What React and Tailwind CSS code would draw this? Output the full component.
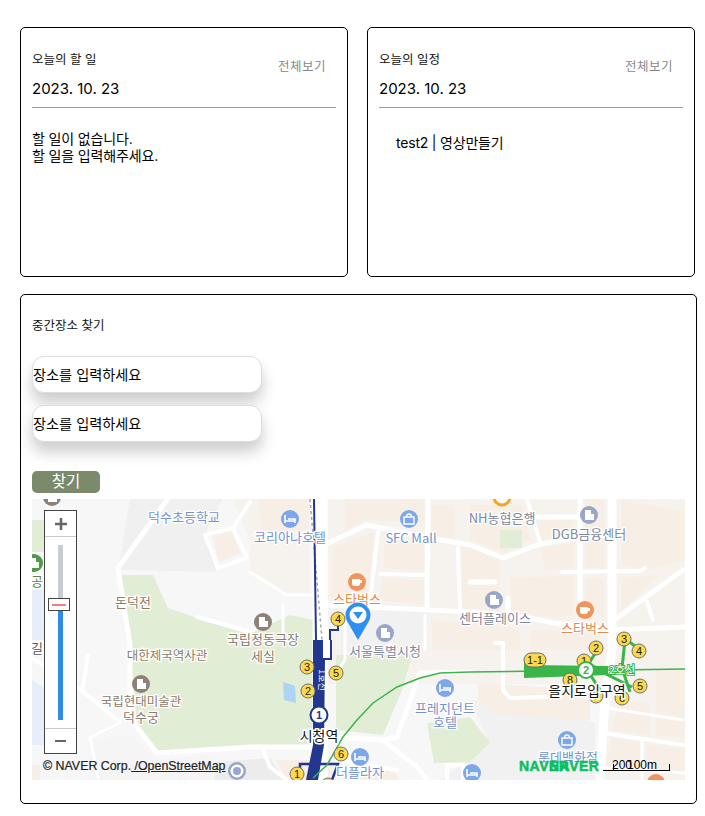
const FONT = "font-['Inter','Noto_Sans_CJK_KR',sans-serif]";

function TodayCard({ title, children }) {
  return (
    <div className="w-[328px] h-[250px] border border-black rounded-[5px] bg-white pt-[23px] px-[11px]">
      <div className="flex justify-between w-[304px]">
        <div className="text-[12.5px] leading-[17px] text-[#111]">{title}</div>
        <div className="text-[12.5px] leading-[17px] tracking-[0.5px] text-[#888] mt-[7px] mr-[10px]">전체보기</div>
      </div>
      <div className="text-[15px] leading-[20px] text-black mt-[4px] pb-[8px] border-b border-[#999] w-[304px]">2023. 10. 23</div>
      {children}
    </div>
  );
}

const greens = [
  "32,520 44,520 44,552 32,552",
  "120,575 153,575 168,608 197,618 250,634 290,615 313,620 313,745 250,745 157,752 137,727 130,645",
  "336,655 413,652 402,690 383,735 336,730",
  "427,723 470,717 490,743 470,762 434,763",
  "500,530 522,530 522,548 500,548",
];

const blocks = [
  "212,535 231,531 241,553 219,562",
  "258,499 308,499 308,530 262,535",
  "345,499 424,499 424,522 367,520 345,530",
  "332,548 374,532 368,600 332,600",
  "384,535 424,540 424,570 384,568",
  "384,578 424,580 424,605 378,600",
  "432,505 455,505 455,540 432,535",
  "462,545 500,560 500,612 462,608",
  "470,505 522,505 525,515 530,540 505,552 470,540",
  "532,520 573,520 573,535 540,540",
  "540,548 573,543 573,568 545,570",
  "510,578 573,576 573,615 555,618 510,610",
  "585,499 604,499 604,530 585,532",
  "585,540 604,538 604,568 585,568",
  "585,578 604,578 604,615 585,612",
  "622,499 685,512 685,560 645,570 622,565",
  "622,578 660,575 622,610",
  "432,620 520,628 520,650 432,650",
  "530,630 600,632 600,650 530,650",
  "620,700 650,702 650,735 612,730",
  "656,670 685,670 685,738 656,735",
  "478,683 590,690 590,720 500,715 478,700",
  "612,738 640,742 640,765 606,765",
  "647,745 685,748 685,772 647,772",
  "275,760 332,760 337,780 288,780",
  "345,765 395,772 400,780 345,780",
  "32,765 40,765 40,780 32,780",
];

const roads = [
  ["M320 499 L320 780", 15],
  ["M612 499 L612 650 L605 700 L600 780", 9],
  ["M328 543 L367 525 L430 538 L470 545 L503 558 L537 545 L577 537 L607 535 L612 535", 5],
  ["M378 532 L370 602", 4],
  ["M428 500 L427 608", 5],
  ["M458 548 L460 612", 4],
  ["M328 605 L470 612 L530 618 L553 623 L612 630 L685 627", 5],
  ["M380 574 L425 575", 4],
  ["M527 499 L540 542", 4],
  ["M530 517 L580 517", 5],
  ["M580 499 L580 600", 5],
  ["M562 572 L640 571 L645 568", 4],
  ["M470 582 L495 582", 5],
  ["M617 618 L683 570", 5],
  ["M647 602 L653 620", 4],
  ["M508 598 L508 615", 5],
  ["M250 572 L287 595 L313 595", 3],
  ["M283 605 L283 635", 3],
  ["M250 502 L233 528 L247 558 L218 568 L205 535 L233 528", 4],
  ["M167 500 L118 568 L130 645 L130 713 L137 727 L157 753 L250 747 L313 747", 5],
  ["M77 687 L120 722", 4],
  ["M32 658 L77 687", 4],
  ["M88 655 L83 687", 4],
  ["M120 723 L90 737 L98 778", 3],
  ["M197 617 L250 632", 4],
  ["M330 737 L383 740 L397 737 L420 673 L470 672", 5],
  ["M383 740 L417 767 L427 780", 5],
  ["M263 750 L270 767 L287 780", 4],
  ["M337 760 L397 770", 4],
  ["M447 780 L447 765 L463 765 L463 780", 4],
  ["M495 643 L503 643 L503 690 L510 698 L547 697", 4],
  ["M603 733 L683 745", 4],
  ["M607 708 L683 720", 3],
  ["M642 740 L642 780", 3],
  ["M603 767 L685 773", 3],
  ["M345 615 L345 660 L332 680", 3],
  ["M425 615 L425 650", 3],
];

const labels = [
  ["덕수초등학교", 184, 522, "#7592cf"],
  ["코리아나호텔", 290, 542, "#7592cf"],
  ["SFC Mall", 411, 543, "#7592cf"],
  ["NH농협은행", 502, 523, "#7d889c"],
  ["DGB금융센터", 589, 539, "#7d889c"],
  ["스타벅스", 357, 604, "#e08a4c"],
  ["스타벅스", 585, 633, "#e08a4c"],
  ["돈덕전", 133, 607, "#8a7b6b"],
  ["국립정동극장", 263, 644, "#8a7b6b"],
  ["세실", 263, 661, "#8a7b6b"],
  ["덕수궁", 141, 722, "#8a7b6b"],
  ["서울특별시청", 385, 656, "#7d889c"],
  ["센터플레이스", 495, 623, "#7d889c"],
  ["프레지던트", 445, 713, "#7592cf"],
  ["호텔", 445, 727, "#7592cf"],
  ["더플라자", 360, 777, "#7592cf"],
  ["롯데백화점", 568, 762, "#7592cf"],
  ["공", 37, 586, "#5a8a50"],
  ["길", 37, 653, "#555555"],
];

const exits = [
  ["4", 338, 619], ["3", 307, 667], ["5", 336, 673], ["2", 308, 691], ["6", 341, 754], ["1", 297, 774],
  ["3", 624, 639], ["4", 639, 651], ["2", 596, 648], ["1", 584, 661], ["8", 570, 680], ["5", 640, 686], ["6", 622, 698], ["7", 596, 696],
];

const icons = [
  [290, 519, "#7ea6ea", "hotel"],
  [409, 519, "#7ea6ea", "shop"],
  [589, 515, "#98a6c9", "bld"],
  [494, 600, "#98a6c9", "bld"],
  [385, 633, "#98a6c9", "bld"],
  [357, 582, "#f0935c", "cup"],
  [585, 610, "#f0935c", "cup"],
  [263, 622, "#8d8178", "bld"],
  [141, 684, "#8d8178", "bld"],
  [445, 688, "#7ea6ea", "hotel"],
  [360, 757, "#7ea6ea", "hotel"],
  [567, 740, "#7ea6ea", "shop"],
  [472, 773, "#7ea6ea", "hotel"],
  [237, 771, "#98a6c9", "ring"],
  [656, 783, "#f0935c", "cup"],
  [52, 497, "#8d8178", "bld"],
  [34, 563, "#4f9a45", "bld"],
];

function MapIcon({ x, y, color, kind }) {
  if (kind === "ring") {
    return (
      <g>
        <circle cx={x} cy={y} r="9" fill="#98a6c9" />
        <circle cx={x} cy={y} r="6.5" fill="#fff" />
        <circle cx={x} cy={y} r="4" fill="#98a6c9" />
      </g>
    );
  }
  return (
    <g>
      <circle cx={x} cy={y} r="9" fill={color} />
      {kind === "hotel" && <path d={`M${x - 5} ${y - 4}v8M${x - 5} ${y + 2}h10v2M${x - 2} ${y}h7v2`} stroke="#fff" strokeWidth="1.6" fill="none" />}
      {kind === "shop" && <path d={`M${x - 5} ${y - 2}h10v7h-10zM${x - 2.5} ${y - 2}c0-4 5-4 5 0`} stroke="#fff" strokeWidth="1.4" fill="none" />}
      {kind === "bld" && <path d={`M${x - 4} ${y - 5}h6v10h-6zM${x + 2} ${y - 1}h3v6h-3z`} fill="#fff" />}
      {kind === "cup" && <path d={`M${x - 5} ${y - 3}h8v4c0 2-1 3-2 3h-4c-1 0-2-1-2-3zM${x + 3} ${y - 2}h2v3h-2z`} fill="#fff" />}
    </g>
  );
}

function MapCanvas() {
  return (
    <div className="relative w-[653px] h-[281px] overflow-hidden bg-[#f7f7f7] mt-[6px]">
      <svg width="653" height="281" viewBox="32 499 653 281" className="block">
        <rect x="328" y="499" width="357" height="185" fill="#f6f2ee" />
        <rect x="605" y="684" width="80" height="96" fill="#f6f2ee" />
        <path d="M130 499H222L207 530L216 572L118 570Z" fill="#f0f0f0" />
        <path d="M232 499H310V595L285 595L250 570L250 540Z" fill="#f6f3ef" />
        <path d="M32 590L44 590L44 640L32 640Z" fill="#e6eef7" />
        <path d="M32 680L62 700L62 745L32 745Z" fill="#e6eef7" />
        <path d="M340 610 L430 612 L420 650 L340 650Z" fill="#f1f1f1" />
        <path d="M470 700 L595 722 L595 780 L440 780 L490 745Z" fill="#f1f1f1" />
        <path d="M88 740L130 735L157 760L215 755L215 780L90 780Z" fill="#f5f5f5" />
        <path d="M215 762 L270 758 L285 780 L215 780Z" fill="#ececec" />
        {blocks.map(p => <polygon key={p} points={p} fill="#f7eee5" />)}
        {greens.map(p => <polygon key={p} points={p} fill="#e2edd5" />)}
        <path d="M283 682 L295 686 L296 703 L284 700Z" fill="#aed4f3" />
        {roads.map((r, i) => <path key={i} d={r[0]} fill="none" stroke="#fff" strokeWidth={r[1]} strokeLinejoin="round" strokeLinecap="round" />)}
        <path d="M310 499 L322 640" stroke="#a8a8a8" strokeWidth="1.5" strokeDasharray="3 3" fill="none" />
        <path d="M314 499 L316 640" stroke="#23378f" strokeWidth="2" fill="none" />
        <path d="M338 622 L338 630 L330 630 L330 640" stroke="#23378f" strokeWidth="2" fill="none" />
        <path d="M313 640 H332 V660 H325 L324 745 L318 780 H306 L313 745 Z" fill="#23378f" />
        <path d="M323 640 h7 v18 h-7z" fill="#fff" />
        <path d="M300 773 V764 H338 L332 780" stroke="#23378f" strokeWidth="2.5" fill="none" />
        <path d="M685 669 L615 670 L470 672 L440 673 L420 678 L397 687 L373 703 L357 720 L343 737 L327 765 L313 778" stroke="#39b54a" strokeWidth="1.5" fill="none" />
        <path d="M524 658 H527 V665 L608 666 V675 L524 678Z" fill="#39b54a" />
        <path d="M584 660L602 672L632 687M596 652L586 668L600 690M625 640L622 668L630 692M627 640L640 650" stroke="#39b54a" strokeWidth="3" fill="none" />
        {icons.map((c, i) => <MapIcon key={i} x={c[0]} y={c[1]} color={c[2]} kind={c[3]} />)}
        <circle cx="502" cy="497" r="8" fill="#fff" stroke="#f5a623" strokeWidth="3" />
        <g fontFamily="'Noto Sans CJK KR',sans-serif" fontSize="13" textAnchor="middle" stroke="#fff" strokeWidth="2.5" paintOrder="stroke">
          {labels.map((l, i) => <text key={i} x={l[1]} y={l[2]} fill={l[3]}>{l[0]}</text>)}
          <text x="167" y="660" fontSize="12.5" fill="#8a7b6b">대한제국역사관</text>
          <text x="141" y="706" fontSize="12.5" fill="#8a7b6b">국립현대미술관</text>
        </g>
        <circle cx="328" cy="785" r="7" fill="#fcd94b" stroke="#6e6e6e" />
        <g fontFamily="'Liberation Sans',sans-serif" fontSize="11" textAnchor="middle">
          {exits.map((e, i) => (
            <g key={i}>
              <circle cx={e[1]} cy={e[2]} r="7" fill="#fcd94b" stroke="#6e6e6e" />
              <text x={e[1]} y={e[2] + 4} fill="#222">{e[0]}</text>
            </g>
          ))}
          <rect x="524" y="653" width="22" height="14" rx="7" fill="#fcd94b" stroke="#6e6e6e" />
          <text x="535" y="664" fill="#222">1-1</text>
        </g>
        <circle cx="319" cy="715" r="8.5" fill="#fff" stroke="#23378f" strokeWidth="2" />
        <circle cx="586" cy="670" r="8" fill="#fff" stroke="#39b54a" strokeWidth="2" />
        <g fontFamily="'Liberation Sans',sans-serif" fontSize="11" fontWeight="700" textAnchor="middle">
          <text x="319" y="719" fill="#23378f">1</text>
          <text x="586" y="674" fill="#39b54a">2</text>
        </g>
        <g fontFamily="'Noto Sans CJK KR',sans-serif" textAnchor="middle">
          <text x="622" y="674" fontSize="11" fill="#fff" stroke="#39b54a" strokeWidth="2" paintOrder="stroke">2호선</text>
          <text x="319" y="680" fontSize="9" fill="#fff" transform="rotate(90 319 680)">1호선</text>
          <text x="319" y="741" fontSize="14" fill="#111" stroke="#fff" strokeWidth="3" paintOrder="stroke">시청역</text>
          <text x="587" y="696" fontSize="14" fill="#111" stroke="#fff" strokeWidth="3" paintOrder="stroke">을지로입구역</text>
        </g>
        <path d="M358 640 L347 621 A12.5 12.5 0 1 1 369 621Z" fill="#2f8ff0" />
        <circle cx="358" cy="615" r="8.5" fill="#fff" />
        <path d="M353 612 H363 L358 619Z" fill="#2f8ff0" />
      </svg>

      {/* zoom control */}
      <div className="absolute left-[12px] top-[11px] w-[33px] h-[244px] bg-white border border-[#444] flex flex-col items-center">
        <div className="w-full h-[26px] border-b border-[#c8c8c8] flex items-center justify-center shrink-0">
          <svg width="12" height="12" viewBox="0 0 12 12"><path d="M6 0v12M0 6h12" stroke="#666" strokeWidth="2.5" /></svg>
        </div>
        <div className="relative w-[5px] h-[175px] mt-[8px] bg-[#c8ccd2] shrink-0">
          <div className="absolute left-0 right-0 top-[62px] bottom-0 bg-[#2f8bea]" />
          <div className="absolute left-[-10px] top-[53px] w-[22px] h-[13px] bg-white border border-[#444] flex items-center justify-center">
            <div className="w-[14px] h-[2px] bg-[#f47a84]" />
          </div>
        </div>
        <div className="w-full mt-[8px] border-t border-[#c8c8c8] flex-1 flex items-center justify-center">
          <div className="w-[11px] h-[2.5px] bg-[#666]" />
        </div>
      </div>

      {/* attribution */}
      <div className="absolute left-[11px] top-[260px] whitespace-nowrap font-['Liberation_Sans',sans-serif] text-[12.4px] leading-[14px] text-[#222] [-webkit-text-stroke:0.2px_#222]">
        © NAVER Corp.<span className="underline"> /OpenStreetMap</span>
      </div>
      <div className="absolute left-[487px] top-[260px] font-['Liberation_Sans',sans-serif] font-bold tracking-[0.5px] text-[14px] leading-[14px] text-[#0bc05c] [-webkit-text-stroke:0.5px_#0bc05c] whitespace-nowrap">NAVER</div>
      <div className="absolute left-[517px] top-[260px] font-['Liberation_Sans',sans-serif] font-bold tracking-[0.5px] text-[14px] leading-[14px] text-[#0bc05c] [-webkit-text-stroke:0.5px_#0bc05c] whitespace-nowrap">NAVER</div>
      <div className="absolute left-[580px] top-[259px] font-['Liberation_Sans',sans-serif] text-[12px] leading-[14px] text-black whitespace-nowrap">200</div>
      <div className="absolute left-[595px] top-[259px] font-['Liberation_Sans',sans-serif] text-[12px] leading-[14px] text-black whitespace-nowrap">100m</div>
      <div className="absolute left-[571px] top-[271px] w-[66px] h-[1px] bg-black" />
      <div className="absolute left-[581px] top-[265px] w-[57px] h-[7px] border-l border-r border-black" />
    </div>
  );
}

export default function App() {
  return (
    <div className={`${FONT} w-[705px] h-[816px] bg-white pt-[27px] pl-[20px] overflow-hidden`}>
      <div className="flex gap-[19px]">
        <TodayCard title="오늘의 할 일">
          <div className="mt-[22px] text-[14px] tracking-[-0.15px] leading-[17px] text-black">
            <div>할 일이 없습니다.</div>
            <div>할 일을 입력해주세요.</div>
          </div>
        </TodayCard>
        <TodayCard title="오늘의 일정">
          <div className="mt-[26px] pl-[17px] text-[14px] tracking-[-0.2px] leading-[17px] text-black">test2 | 영상만들기</div>
        </TodayCard>
      </div>

      <div className="mt-[17px] w-[677px] h-[510px] border border-black rounded-[5px] px-[11px] pt-[22px]">
        <div className="text-[12.5px] leading-[17px] text-[#111]">중간장소 찾기</div>
        <div className="mt-[22px] flex flex-col gap-[12px]">
          <input className="w-[230px] h-[37px] rounded-[12px] border border-[#ddd] bg-white text-[14.2px] shadow-[0_10px_15px_rgba(0,0,0,0.2)] placeholder:text-black outline-none" placeholder="장소를 입력하세요" />
          <input className="w-[230px] h-[37px] rounded-[12px] border border-[#ddd] bg-white text-[14.2px] shadow-[0_10px_15px_rgba(0,0,0,0.2)] placeholder:text-black outline-none" placeholder="장소를 입력하세요" />
        </div>
        <button className="block mt-[29px] w-[68px] h-[22px] rounded-[5px] bg-[#7b8a6b] text-white text-[15.5px] leading-[22px]">찾기</button>
        <MapCanvas />
      </div>
    </div>
  );
}
